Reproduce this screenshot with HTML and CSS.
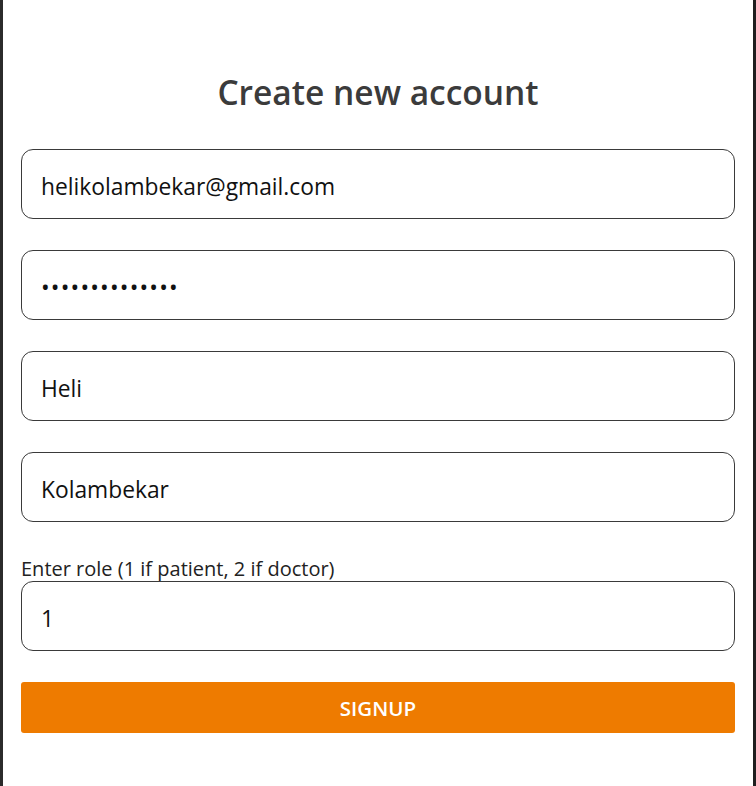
FILE: index.html
```html
<!DOCTYPE html>
<html lang="en">
<head>
<meta charset="utf-8">
<title>Create new account</title>
<link rel="stylesheet" href="styles.css">
</head>
<body>
<div class="frame">
  <main class="panel">
    <h1 class="title">Create new account</h1>
    <form class="form" onsubmit="return false">
      <input class="field" type="email" value="helikolambekar@gmail.com" aria-label="Email">
      <input class="field field-pass" type="password" value="helipassword12" aria-label="Password">
      <input class="field" type="text" value="Heli" aria-label="First name">
      <input class="field" type="text" value="Kolambekar" aria-label="Last name">
      <div class="group">
        <label class="label" for="role">Enter role (1 if patient, 2 if doctor)</label>
        <input class="field" id="role" type="text" value="1">
      </div>
      <button class="btn" type="submit">SIGNUP</button>
    </form>
  </main>
</div>
</body>
</html>
```
FILE: styles.css
```css
* { box-sizing: border-box; }
html, body { margin: 0; padding: 0; background: #fff; }
body { font-family: "Open Sans", "Noto Sans", sans-serif; color: #111; }
.frame {
  min-height: 786px;
  border-left: 3px solid #2b2b2b;
  border-right: 3px solid #1f1f1f;
  background: #fff;
}
.panel { padding: 68px 18px 0; }
.title {
  margin: 0 0 33px;
  text-align: center;
  font-size: 33.5px;
  line-height: 48px;
  font-weight: 600;
  color: #3b3b3b;
}
.form { display: flex; flex-direction: column; gap: 31px; }
.field {
  display: block;
  width: 100%;
  height: 70px;
  border: 1px solid #3a3a3a;
  border-radius: 12px;
  padding: 4px 19px 0;
  font-family: inherit;
  font-size: 22.8px;
  color: #111;
  background: #fff;
  outline: none;
}
.field-pass { letter-spacing: 1.2px; font-size: 23px; }
.group { display: flex; flex-direction: column; gap: 0; margin-top: 4px; }
.label { font-size: 20px; line-height: 24px; color: #222; }
.btn {
  height: 51px;
  border: none;
  border-radius: 3px;
  background: #ee7b00;
  color: #fff;
  font-family: inherit;
  font-size: 20.5px;
  font-weight: 600;
  padding-top: 2px;
  cursor: pointer;
}
```
